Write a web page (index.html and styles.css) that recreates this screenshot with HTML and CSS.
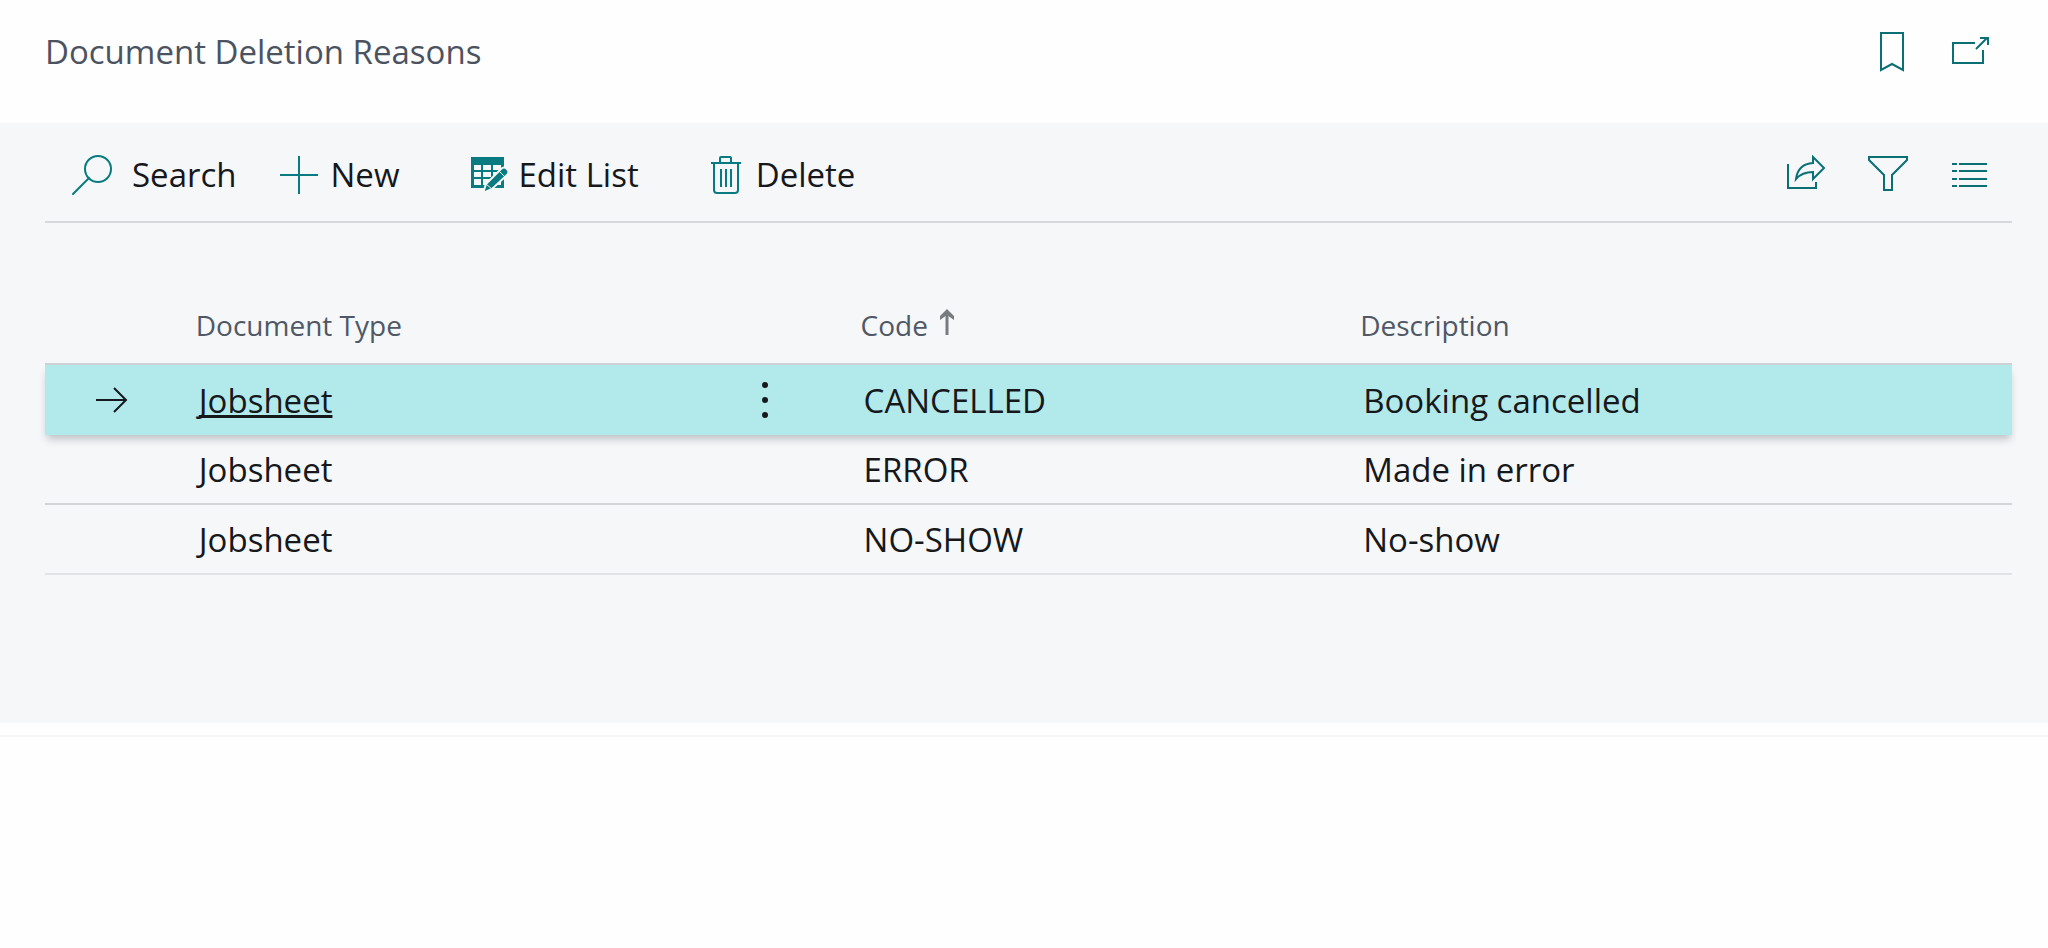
FILE: index.html
```html
<!DOCTYPE html>
<html lang="en">
<head>
<meta charset="utf-8">
<meta name="viewport" content="width=device-width, initial-scale=1">
<title>Document Deletion Reasons</title>
<link rel="stylesheet" href="styles.css">
</head>
<body>
<header class="page-header">
  <h1 class="page-title">Document Deletion Reasons</h1>
  <div class="header-actions">
    <button class="icon-button" type="button" aria-label="Bookmark">
      <svg width="26" height="40" viewBox="0 0 26 40" fill="none" stroke="currentColor" stroke-width="2"><path d="M2 1H24V38L13 32L2 38Z"/></svg>
    </button>
    <button class="icon-button" type="button" aria-label="Open in new window">
      <svg width="38" height="40" viewBox="0 0 38 40" fill="none" stroke="currentColor" stroke-width="2"><path d="M24 11H2V31H32V18"/><path d="M25 17L36 6M29 6H37V13"/></svg>
    </button>
  </div>
</header>
<main class="panel">
  <div class="toolbar">
    <div class="toolbar-group">
      <button class="tool tool-search" type="button">
        <svg width="40" height="40" viewBox="0 0 40 40" fill="none" stroke="currentColor" stroke-width="2" stroke-linecap="round"><circle cx="26" cy="14" r="13"/><path d="M17 23L1 39"/></svg>
        Search
      </button>
      <button class="tool tool-new" type="button">
        <svg width="38" height="38" viewBox="0 0 38 38" fill="none" stroke="currentColor" stroke-width="2"><path d="M19 0V38M0 19H38"/></svg>
        New
      </button>
    </div>
    <button class="tool tool-edit" type="button">
      <svg width="38" height="36" viewBox="0 0 38 36"><path fill="currentColor" fill-rule="evenodd" d="M0 0H33V31H0ZM3 8V13H10V8ZM12 8V13H20V8ZM22 8V13H30V8ZM3 15V20H10V15ZM12 15V20H20V15ZM22 15V20H30V15ZM3 22V28H10V22ZM12 22V28H20V22ZM22 22V28H30V22Z"/><path class="pencil" fill="currentColor" stroke-width="2" d="M12 36L15 27L30 12Q33 9 36 12T36 18L21 32Z"/><path class="pencil" fill="none" stroke-width="1" d="M28 14L34 20M15 27L21 32"/></svg>
      Edit List
    </button>
    <button class="tool tool-delete" type="button">
      <svg width="32" height="38" viewBox="0 0 32 38" fill="none" stroke="currentColor" stroke-width="2"><path d="M0 7H30M9 7V2Q9 1 10 1H19Q20 1 20 2V7M3 7V34Q3 37 6 37H24Q27 37 27 34V7M10 13V31M15 13V31M20 13V31"/></svg>
      Delete
    </button>
    <div class="view-actions">
      <button class="icon-button" type="button" aria-label="Share">
        <svg width="40" height="40" viewBox="0 0 40 40" fill="none" stroke="currentColor" stroke-width="2"><path d="M2 9V33H30V27"/><path d="M27 2L38 13L27 24V17Q16 17 10 24Q12 9 27 8Z"/></svg>
      </button>
      <button class="icon-button" type="button" aria-label="Filter">
        <svg width="42" height="40" viewBox="0 0 42 40" fill="none" stroke="currentColor" stroke-width="2"><path d="M1 2H39V5L24 20V35H16V20L1 5Z"/></svg>
      </button>
      <button class="icon-button" type="button" aria-label="Show as list">
        <svg width="36" height="40" viewBox="0 0 36 40" fill="none" stroke="currentColor" stroke-width="2"><path d="M0 9H5M7 9H35M0 16H5M7 16H35M0 24H5M7 24H35M0 31H5M7 31H35"/></svg>
      </button>
    </div>
  </div>
  <table class="list">
    <colgroup>
      <col class="col-marker"><col class="col-type"><col class="col-menu"><col class="col-code"><col>
    </colgroup>
    <thead>
      <tr>
        <th></th>
        <th scope="col">Document Type</th>
        <th></th>
        <th scope="col" aria-sort="ascending"><span class="sorted">Code <svg width="14" height="26" viewBox="0 0 14 26" fill="none" stroke="currentColor" stroke-width="3"><path d="M7 26V2"/><path fill="currentColor" stroke="none" d="M7 0L14 7V11L7 6L0 11V7Z"/></svg></span></th>
        <th scope="col">Description</th>
      </tr>
    </thead>
    <tbody>
      <tr class="selected">
        <td class="marker"><svg width="32" height="26" viewBox="0 0 32 26" fill="none" stroke="currentColor" stroke-width="2"><path d="M0 13H30M18 1L30 13L18 25"/></svg></td>
        <td><a class="record-link" href="#jobsheet">Jobsheet</a></td>
        <td class="menu"><button class="row-menu" type="button" aria-label="More options"><svg width="6" height="36" viewBox="0 0 6 36" fill="currentColor"><circle cx="3" cy="3" r="3"/><circle cx="3" cy="18" r="3"/><circle cx="3" cy="33" r="3"/></svg></button></td>
        <td>CANCELLED</td>
        <td>Booking cancelled</td>
      </tr>
      <tr>
        <td></td><td>Jobsheet</td><td></td><td>ERROR</td><td>Made in error</td>
      </tr>
      <tr class="last">
        <td></td><td>Jobsheet</td><td></td><td>NO-SHOW</td><td>No-show</td>
      </tr>
    </tbody>
  </table>
</main>
<footer class="page-end"></footer>
</body>
</html>
```
FILE: styles.css
```css
* { box-sizing: border-box; }

body {
  margin: 0;
  background: #fefefe;
  color: #16181b;
  font-family: "Segoe UI", "Open Sans", "Noto Sans", sans-serif;
  font-size: 33px;
  line-height: 48px;
}

button {
  padding: 0;
  border: 0;
  background: none;
  color: inherit;
  font: inherit;
  cursor: pointer;
}

svg { display: block; flex: none; }

.page-header {
  display: flex;
  align-items: center;
  justify-content: space-between;
  padding: 28px 59px 47px 45px;
}

.page-title {
  margin: 0;
  color: #4b5361;
  font-size: 33px;
  font-weight: 400;
}

.header-actions { display: flex; gap: 46px; }

.icon-button { color: #0b7076; }

.panel {
  padding: 0 36px 148px 45px;
  background: #f5f7f9;
}

.toolbar {
  display: flex;
  align-items: center;
  gap: 72px;
  padding: 28px 24px 22px 27px;
  border-bottom: 2px solid #d6d8dc;
}

.toolbar-group { display: flex; gap: 43px; }

.tool {
  display: flex;
  align-items: center;
  gap: 13px;
  white-space: nowrap;
}

.tool svg { color: #087b81; }
.tool-search { gap: 20px; }
.tool-edit { gap: 9px; }

.pencil { stroke: #f5f7f9; }

.view-actions {
  display: flex;
  gap: 42px;
  margin-left: auto;
}

.list {
  width: 100%;
  margin-top: 80px;
  border-spacing: 0;
  table-layout: fixed;
}

.col-marker { width: 6.8%; }
.col-type { width: 25.8%; }
.col-menu { width: 8%; }
.col-code { width: 25.4%; }

.list th {
  padding: 0 0 16px 17px;
  border-bottom: 2px solid #cdd2d6;
  color: #505866;
  font-size: 28px;
  font-weight: 400;
  line-height: 44px;
  text-align: left;
}

.sorted { display: flex; gap: 12px; }
.sorted svg { margin-top: 6px; color: #777b80; }

.list td {
  height: 70px;
  padding: 2px 0 0 20px;
  border-bottom: 2px solid #d2d4da;
}

.selected { position: relative; box-shadow: 0 6px 8px -2px rgba(60, 70, 75, 0.3); }

.list .selected td {
  border-bottom: 0;
  background: #b2e9eb;
}

.list .last td { border-bottom-color: #e1e3e6; }

.list .marker { padding: 0; }
.marker svg { margin: 0 auto; }

.list .menu { padding: 0; }
.row-menu { display: block; margin: 0 auto; padding: 0 20px; }

.record-link {
  color: inherit;
  text-decoration: underline 3px;
  text-underline-offset: 2px;
  text-decoration-skip-ink: none;
}

.page-end {
  margin-top: 12px;
  border-top: 2px solid #f6f6f7;
}
```
